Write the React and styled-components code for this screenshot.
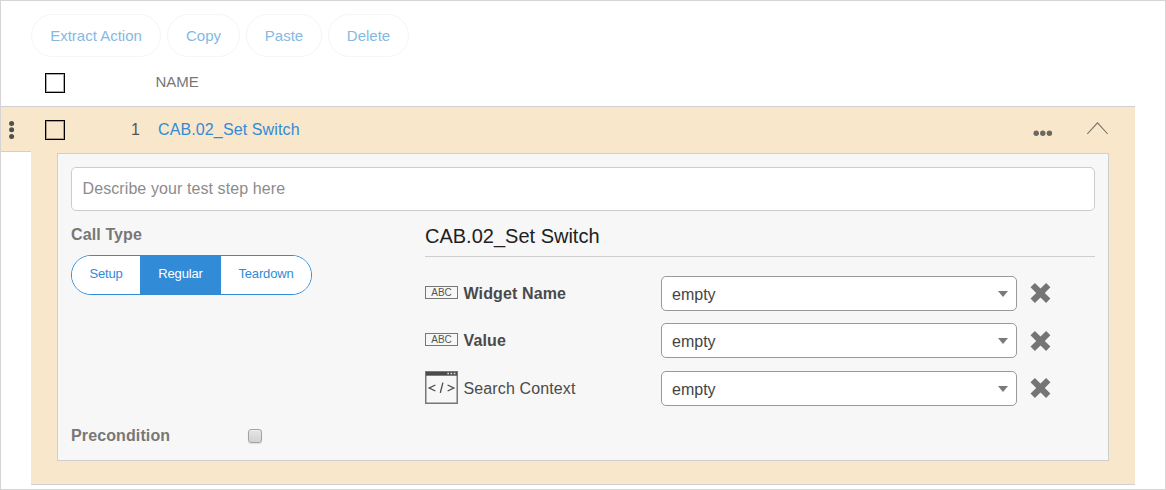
import React from "react";
import styled, { createGlobalStyle } from "styled-components";

const GlobalStyle = createGlobalStyle`
  *, *::before, *::after { box-sizing: border-box; }
  body { margin: 0; background: #fff; font-family: "Liberation Sans", Arial, sans-serif; }
  svg { display: block; flex: none; }
`;

const Frame = styled.div`
  width: 1166px;
  height: 490px;
  border: 1px solid #d5d5d5;
  background: #fff;
  overflow: hidden;
`;

const Toolbar = styled.div`
  display: flex;
  gap: 6px;
  padding: 13px 0 0 30px;
`;

const ToolButton = styled.button`
  width: ${(p) => p.$width}px;
  height: 43px;
  padding: 0;
  border: 1px solid #f5f5f5;
  border-radius: 22px;
  background: #fff;
  color: #83b9e3;
  font: 15px/41px "Liberation Sans", Arial, sans-serif;
  white-space: nowrap;
`;

const Header = styled.div`
  display: flex;
  align-items: center;
  height: 49px;
  padding: 3px 0 0 44px;
`;

const CheckSquare = styled.span`
  flex: none;
  width: 20px;
  height: 20px;
  border: 1px solid #000;
  box-shadow: inset 0 0 0 1px ${(p) => (p.$tinted ? "#a99f8d" : "#aaa")};
`;

const ColumnName = styled.span`
  margin: -3px 0 0 90.5px;
  color: #777;
  font-size: 15px;
  line-height: 20px;
`;

const StepRow = styled.div`
  display: flex;
  width: 1134px;
  height: 46px;
  border-top: 1px solid #cfcfcf;
  background: #f9e7cc;
`;

const DragCell = styled.div`
  width: 30px;
  height: 45px;
  padding: 14px 0 0 7px;
  border-bottom: 1px solid #cfcfcf;
`;

const StepMain = styled.div`
  display: flex;
  flex: 1;
  align-items: center;
  padding-left: 14px;
`;

const StepNumber = styled.span`
  width: 75px;
  color: #555;
  font-size: 16px;
  line-height: 20px;
  text-align: right;
`;

const StepName = styled.a`
  flex: 1;
  margin-left: 18px;
  color: #318bd7;
  font-size: 16px;
  letter-spacing: 0.12px;
  line-height: 20px;
`;

const StepActions = styled.div`
  display: flex;
  align-items: center;
  gap: 34px;
  padding-right: 26px;
`;

const StepBody = styled.div`
  width: 1104px;
  height: 334px;
  margin: -1px 0 0 30px;
  padding: 2px 26px 0;
  border-bottom: 1px solid #cfcfcf;
  background: #f9e7cc;
`;

const Panel = styled.div`
  height: 308px;
  padding: 13px;
  border: 1px solid #cfcfcf;
  background: #f7f7f7;
`;

const DescriptionInput = styled.input`
  display: block;
  width: 100%;
  height: 44px;
  padding: 0 10.5px;
  border: 1px solid #ccc;
  border-radius: 5px;
  background: #fff;
  font: 16px "Liberation Sans", Arial, sans-serif;
  letter-spacing: 0.09px;
  outline: 0;
  &::placeholder { color: #8c8c8c; opacity: 1; }
`;

const Columns = styled.div`
  display: grid;
  grid-template-columns: 354px 1fr;
  height: 249px;
`;

const CallColumn = styled.div`
  display: flex;
  flex-direction: column;
  padding-top: 14px;
`;

const FieldTitle = styled.span`
  color: #777;
  font-size: 16px;
  font-weight: 700;
  letter-spacing: 0.12px;
  line-height: 20px;
`;

const Segments = styled.div`
  display: flex;
  width: 241px;
  height: 40px;
  margin-top: 10px;
  border: 1px solid #318bd7;
  border-radius: 20px;
  background: #fff;
  overflow: hidden;
`;

const Segment = styled.button`
  width: ${(p) => p.$width}px;
  padding: 0 0 4px;
  border: 0;
  background: ${(p) => (p.$active ? "#318bd7" : "#fff")};
  color: ${(p) => (p.$active ? "#fff" : "#318bd7")};
  font: 13px "Liberation Sans", Arial, sans-serif;
  letter-spacing: -0.17px;
`;

const PreconditionRow = styled.label`
  display: flex;
  align-items: center;
  justify-content: space-between;
  width: 191px;
  margin-top: 131px;
`;

const SoftCheckbox = styled.span`
  width: 14px;
  height: 14px;
  border: 1px solid #a3a3a3;
  border-radius: 3px;
  background: linear-gradient(#e4e4e4, #d2d2d2);
  box-shadow: 0 1px 1px #ddd, inset 0 1px 0 #eee;
`;

const ParamsTitle = styled.div`
  height: 46px;
  padding-top: 13px;
  border-bottom: 1px solid #cfcfcf;
  color: #212121;
  font-size: 20px;
  line-height: 24px;
`;

const Params = styled.div`
  display: grid;
  grid-template-rows: 47px 47px 49px;
  padding-top: 13px;
`;

const Param = styled.div`
  display: grid;
  grid-template-columns: 38px 198px 356px 21px;
  align-items: center;
`;

const ParamName = styled.span`
  padding-left: 0.5px;
  color: #4a4a4a;
  font-size: 16px;
  letter-spacing: 0.12px;
  font-weight: ${(p) => (p.$bold ? 700 : 400)};
  line-height: 20px;
`;

const Select = styled.div`
  display: flex;
  align-items: center;
  justify-content: space-between;
  height: 35px;
  padding: 0 8px 0 10px;
  border: 1px solid #999;
  border-radius: 5px;
  background: #fff;
  color: #444;
  font-size: 16px;
`;

const SelectValue = styled.span`
  padding-top: 2px;
`;

const RemoveButton = styled.button`
  margin: ${(p) => (p.$raised ? "-2px" : "0")} 0 0 12.5px;
  padding: 0;
  border: 0;
  background: none;
`;

const TextBadge = styled.span`
  width: 33px;
  height: 13px;
  margin-top: -2px;
  border: 1px solid #777;
  color: #555;
  font-size: 10px;
  line-height: 12px;
  text-align: center;
`;

const DragDots = () => (
  <svg width="8" height="19" viewBox="0 0 8 19" fill="#505050">
    <circle cx="3.6" cy="2.5" r="2.5" />
    <circle cx="3.6" cy="8.7" r="2.5" />
    <circle cx="3.6" cy="15.4" r="2.5" />
  </svg>
);

const MoreDots = () => (
  <svg width="20" height="12" viewBox="0 0 20 12" fill="#6b6762">
    <circle cx="3.2" cy="9.3" r="2.7" />
    <circle cx="9.8" cy="9.3" r="2.7" />
    <circle cx="16.4" cy="9.3" r="2.7" />
  </svg>
);

const Collapse = () => (
  <svg width="22" height="15" viewBox="0 0 22 15" fill="none" stroke="#77716b" strokeWidth="1.1">
    <path d="M.3 12 10.5 .8 20.7 12" />
  </svg>
);

const Caret = () => (
  <svg width="10" height="6" viewBox="0 0 10 6" fill="#7a7a7a">
    <path d="M0 0H10L5 6Z" />
  </svg>
);

const Cross = () => (
  <svg width="21" height="20" viewBox="0 0 21 20" fill="#757575">
    <path d="M4.9 0 10.5 5.6 16.1 0 20.4 4.3 14.8 9.9 20.4 15.6 16.1 20 10.5 14.4 4.9 20 .5 15.6 6.2 9.9.5 4.3Z" />
  </svg>
);

const CodeWindow = () => (
  <svg width="33" height="35" viewBox="0 0 33 35" fill="none">
    <path d="M.75.75H32.25V32.25H.75Z" stroke="#777" strokeWidth="1.5" />
    <path d="M1 1H32V4.7H1Z" fill="#4a4a4a" />
    <path d="M22.3 2.5H24M25.5 2.5H27.2M28.7 2.5H30.4" stroke="#ddd" strokeWidth="1.3" />
    <path d="M10.4 14 4.2 17 10.4 20M22.6 14 28.8 17 22.6 20M17.9 11.7 15.3 21.8" stroke="#4a4a4a" strokeWidth="1.3" />
  </svg>
);

const tools = [["Extract Action", 130], ["Copy", 73], ["Paste", 76], ["Delete", 81]];
const callTypes = [["Setup", 68], ["Regular", 81], ["Teardown", 90]];
const params = [
  { name: "Widget Name", text: true, raised: true },
  { name: "Value", text: true },
  { name: "Search Context", text: false, raised: true },
];

export default function App() {
  return (
    <Frame>
      <GlobalStyle />
      <Toolbar>
        {tools.map(([label, width]) => (
          <ToolButton key={label} $width={width}>{label}</ToolButton>
        ))}
      </Toolbar>
      <Header>
        <CheckSquare />
        <ColumnName>NAME</ColumnName>
      </Header>
      <StepRow>
        <DragCell><DragDots /></DragCell>
        <StepMain>
          <CheckSquare $tinted />
          <StepNumber>1</StepNumber>
          <StepName>CAB.02_Set Switch</StepName>
          <StepActions>
            <MoreDots />
            <Collapse />
          </StepActions>
        </StepMain>
      </StepRow>
      <StepBody>
        <Panel>
          <DescriptionInput placeholder="Describe your test step here" />
          <Columns>
            <CallColumn>
              <FieldTitle>Call Type</FieldTitle>
              <Segments>
                {callTypes.map(([label, width]) => (
                  <Segment key={label} $width={width} $active={label === "Regular"}>{label}</Segment>
                ))}
              </Segments>
              <PreconditionRow>
                <FieldTitle>Precondition</FieldTitle>
                <SoftCheckbox />
              </PreconditionRow>
            </CallColumn>
            <div>
              <ParamsTitle>CAB.02_Set Switch</ParamsTitle>
              <Params>
                {params.map(({ name, text, raised }) => (
                  <Param key={name}>
                    {text ? <TextBadge>ABC</TextBadge> : <CodeWindow />}
                    <ParamName $bold={text}>{name}</ParamName>
                    <Select>
                      <SelectValue>empty</SelectValue>
                      <Caret />
                    </Select>
                    <RemoveButton aria-label="Remove" $raised={raised}><Cross /></RemoveButton>
                  </Param>
                ))}
              </Params>
            </div>
          </Columns>
        </Panel>
      </StepBody>
    </Frame>
  );
}
